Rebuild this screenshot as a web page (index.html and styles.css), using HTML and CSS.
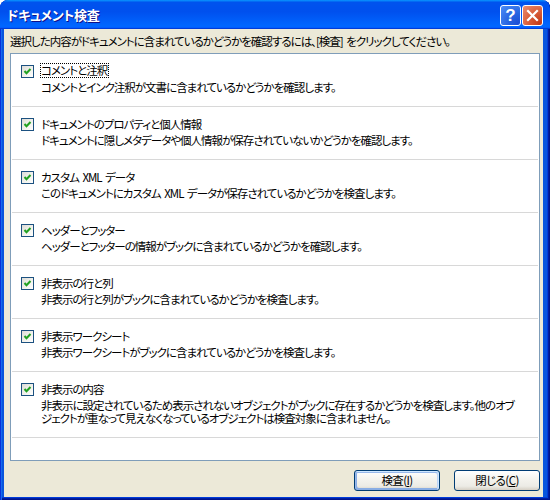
FILE: index.html
```html
<!DOCTYPE html>
<html lang="ja">
<head>
<meta charset="utf-8">
<title>ドキュメント検査</title>
<link rel="stylesheet" href="styles.css">
</head>
<body>
<div class="window">
  <div class="titlebar">
    <span class="title">ドキュメント検査</span>
    <div class="controls">
      <span class="cbtn help">?</span>
      <span class="cbtn close"><svg width="21" height="21" viewBox="0 0 21 21"><path d="M6 6L15 15M15 6L6 15" stroke="#fff" stroke-width="2.2" stroke-linecap="square"/></svg></span>
    </div>
  </div>
  <div class="body">
    <p class="intro">選択した内容がドキュメントに含まれているかどうかを確認するには、[検査] をクリックしてください。</p>
    <ul class="list">
      <li class="item">
        <span class="check"><svg width="11" height="11" viewBox="0 0 11 11"><path d="M2.5 5L4.5 7.2L8.5 3" fill="none" stroke="#21A121" stroke-width="2"/></svg></span>
        <div class="text">
          <div class="name"><span class="focus">コメントと注釈</span></div>
          <div class="desc">コメントとインク注釈が文書に含まれているかどうかを確認します。</div>
        </div>
      </li>
      <li class="item">
        <span class="check"><svg width="11" height="11" viewBox="0 0 11 11"><path d="M2.5 5L4.5 7.2L8.5 3" fill="none" stroke="#21A121" stroke-width="2"/></svg></span>
        <div class="text">
          <div class="name">ドキュメントのプロパティと個人情報</div>
          <div class="desc">ドキュメントに隠しメタデータや個人情報が保存されていないかどうかを確認します。</div>
        </div>
      </li>
      <li class="item">
        <span class="check"><svg width="11" height="11" viewBox="0 0 11 11"><path d="M2.5 5L4.5 7.2L8.5 3" fill="none" stroke="#21A121" stroke-width="2"/></svg></span>
        <div class="text">
          <div class="name">カスタム XML データ</div>
          <div class="desc">このドキュメントにカスタム XML データが保存されているかどうかを検査します。</div>
        </div>
      </li>
      <li class="item">
        <span class="check"><svg width="11" height="11" viewBox="0 0 11 11"><path d="M2.5 5L4.5 7.2L8.5 3" fill="none" stroke="#21A121" stroke-width="2"/></svg></span>
        <div class="text">
          <div class="name">ヘッダーとフッター</div>
          <div class="desc">ヘッダーとフッターの情報がブックに含まれているかどうかを確認します。</div>
        </div>
      </li>
      <li class="item">
        <span class="check"><svg width="11" height="11" viewBox="0 0 11 11"><path d="M2.5 5L4.5 7.2L8.5 3" fill="none" stroke="#21A121" stroke-width="2"/></svg></span>
        <div class="text">
          <div class="name">非表示の行と列</div>
          <div class="desc">非表示の行と列がブックに含まれているかどうかを検査します。</div>
        </div>
      </li>
      <li class="item">
        <span class="check"><svg width="11" height="11" viewBox="0 0 11 11"><path d="M2.5 5L4.5 7.2L8.5 3" fill="none" stroke="#21A121" stroke-width="2"/></svg></span>
        <div class="text">
          <div class="name">非表示ワークシート</div>
          <div class="desc">非表示ワークシートがブックに含まれているかどうかを検査します。</div>
        </div>
      </li>
      <li class="item">
        <span class="check"><svg width="11" height="11" viewBox="0 0 11 11"><path d="M2.5 5L4.5 7.2L8.5 3" fill="none" stroke="#21A121" stroke-width="2"/></svg></span>
        <div class="text">
          <div class="name">非表示の内容</div>
          <div class="desc">非表示に設定されているため表示されないオブジェクトがブックに存在するかどうかを検査します。他のオブ<br>ジェクトが重なって見えなくなっているオブジェクトは検査対象に含まれません。</div>
        </div>
      </li>
    </ul>
    <div class="actions">
      <button class="btn default">検査(<u>I</u>)</button>
      <button class="btn">閉じる(<u>C</u>)</button>
    </div>
  </div>
</div>
</body>
</html>
```
FILE: styles.css
```css
html, body {
  margin: 0;
  padding: 0;
  background: #ffffff;
}
body {
  font-family: "Noto Sans CJK JP", sans-serif;
  font-size: 11.5px;
  color: #000;
  font-feature-settings: "palt";
}
.window {
  width: 550px;
  height: 500px;
  display: flex;
  flex-direction: column;
  background: #0855dd;
  box-shadow: inset 1px 0 #0831d9, inset 2px 0 #166aee, inset -1px -1px #00138c, inset -2px -2px #001ea0, inset -3px -3px #003bda;
  border-radius: 8px 8px 0 0;
  overflow: hidden;
}
.titlebar {
  flex: none;
  height: 29px;
  display: flex;
  align-items: center;
  padding: 0 7px 0 7px;
  background: linear-gradient(180deg, #0997ff, #0053ee 8%, #0050ee 40%, #0066ff 88%, #0066ff 93%, #005bff 95%, #003dd7 96%, #003dd7);
  border-radius: 8px 8px 0 0;
}
.title {
  flex: 1;
  color: #fff;
  font-weight: bold;
  font-size: 13px;
  line-height: 16px;
  text-shadow: 1px 1px #0f1089;
  letter-spacing: -0.3px;
}
.controls {
  display: flex;
  gap: 1px;
  margin-top: 1px;
}
.cbtn {
  width: 21px;
  height: 21px;
  box-sizing: border-box;
  border: 1px solid #fff;
  border-radius: 3px;
  display: flex;
  align-items: center;
  justify-content: center;
  overflow: hidden;
}
.cbtn svg { display: block; margin: -1px; flex: none; }
.help {
  background: radial-gradient(circle at 90% 90%, #1c4ed6 0, #2663e0 40%, #4c8ef7 100%);
  color: #fff;
  font-family: "Liberation Sans", sans-serif;
  font-weight: bold;
  font-size: 17px;
  line-height: 19px;
}
.close {
  background: radial-gradient(circle at 90% 90%, #c23a1a 0, #d75a36 45%, #ec8f72 100%);
}
.body {
  flex: 1;
  margin: 0 7px 3px 4px;
  background: #ece9d8;
  padding: 5px 3px 0 6px;
  display: flex;
  flex-direction: column;
}
.intro {
  margin: 0 0 5px 0;
  line-height: 14px;
  height: 14px;
  white-space: nowrap;
  letter-spacing: -1px;
  word-spacing: 2px;
}
.list {
  list-style: none;
  margin: 0;
  padding: 0;
  height: 406px;
  flex: none;
  border: 1px solid #7f9db9;
  background: #fff;
}
.item {
  display: flex;
  align-items: flex-start;
  margin: 0 1px;
  padding: 9px 0 12px 9px;
  border-bottom: 1px solid #d8d8d8;
}
.check {
  flex: none;
  width: 13px;
  height: 13px;
  box-sizing: border-box;
  margin-top: 2px;
  border: 1px solid #1c5180;
  background: linear-gradient(135deg, #dcdcd7 0%, #f0f0ea 50%, #ffffff 100%);
  display: flex;
  align-items: center;
  justify-content: center;
}
.check svg { display: block; }
.text {
  margin-left: 7px;
  white-space: nowrap;
  letter-spacing: -1px;
  word-spacing: 2px;
}
.name {
  line-height: 16px;
  height: 16px;
}
.focus {
  display: inline-block;
  line-height: 13px;
  border: 1px dotted #000;
  margin: 0 -1px;
  padding-right: 1px;
  vertical-align: top;
}
.desc {
  margin-top: 2px;
  line-height: 13px;
}
.actions {
  display: flex;
  justify-content: flex-end;
  gap: 14px;
  margin-top: 9px;
}
.btn {
  width: 86px;
  height: 21px;
  box-sizing: border-box;
  padding: 0;
  border: 1px solid #003c74;
  border-radius: 3px;
  background: linear-gradient(180deg, #ffffff 0%, #f5f4ef 40%, #ecebe5 80%, #d6d0c5 100%);
  font-family: "Noto Sans CJK JP", sans-serif;
  font-size: 11.5px;
  line-height: 17px;
  color: #000;
  font-feature-settings: "palt";
  letter-spacing: -0.6px;
}
.btn u { text-underline-offset: 1px; }
.default {
  box-shadow: inset -1px 1px #cee7ff, inset 1px 2px #98b8ea, inset -2px 2px #bcd4f6, inset 1px -1px #89ade4, inset 2px -2px #89ade4;
}
```
